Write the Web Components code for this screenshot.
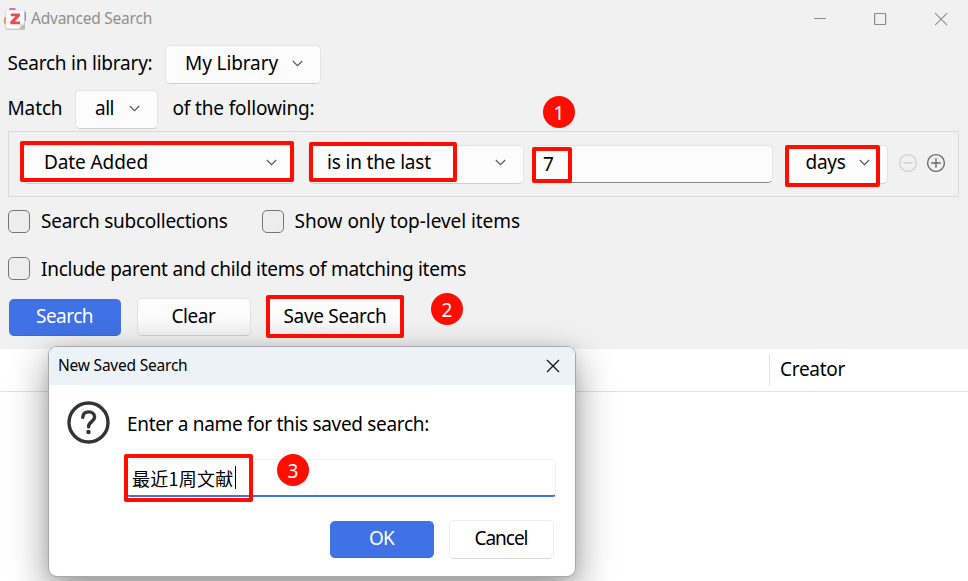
<!DOCTYPE html>
<html lang="en">
<head>
<meta charset="utf-8">
<title>Advanced Search</title>
<style>
html,body{margin:0;padding:0;overflow:hidden}
body{width:968px;height:581px;font:19px/26px "Noto Sans","Noto Sans CJK SC",sans-serif;color:#000;background:#fff}
</style>
</head>
<body>
<search-window></search-window>
<script>
function define(name, html, after) {
  const t = document.createElement('template');
  t.innerHTML = html;
  customElements.define(name, class extends HTMLElement {
    connectedCallback() {
      if (this.shadowRoot) return;
      this.attachShadow({mode: 'open'}).append(t.content.cloneNode(true));
      if (after) after.call(this, this.shadowRoot);
    }
  });
}

/* A text run spaced out to an exact advance width. */
define('fit-text', `<style>
:host{display:inline-block;white-space:pre;flex:none}
span{display:inline-block}
</style><span><slot></slot></span>`, function (r) {
  const w = parseFloat(this.getAttribute('w')), s = r.querySelector('span');
  const n = this.textContent.length;
  if (w) {
    s.style.letterSpacing = ((w - 1 - s.getBoundingClientRect().width) / n) + 'px';
    this.style.width = w + 'px';
  }
});

define('select-box', `<style>
:host{display:flex;box-sizing:border-box;height:38.5px;align-items:center;justify-content:space-between;background:#fcfcfc;border:1px solid #e3e3e3;border-bottom-color:#cfcfcf;border-radius:5px;padding:0 17.5px 3px 19px;flex:none}
svg{width:11px;height:7px;display:block;margin-top:1px}
</style><slot></slot><svg viewBox="0 0 11 7" fill="none" stroke="#555" stroke-width="1.1"><path d="M.8 1 5.5 5.7 10.2 1"/></svg>`);

define('check-item', `<style>
:host{display:flex;align-items:center;gap:11px;height:24px;flex:none}
i{box-sizing:border-box;width:22px;height:23px;border:1.5px solid #767676;border-radius:5px;background:#ededed}
div{padding-bottom:var(--lift,2px)}
</style><i></i><div><slot></slot></div>`);

define('push-button', `<style>
:host{display:flex;box-sizing:border-box;height:38.5px;align-items:center;justify-content:center;border:1px solid #e2e2e2;border-bottom-color:#cfcfcf;border-radius:5px;background:linear-gradient(#fdfdfd,#fbfbfb 55%,#f1f1f1);padding-bottom:var(--drop,3px);flex:none}
:host([primary]){background:#4072e5;color:#fff;border-color:#4072e5 #4072e5 #3e69cc;height:37px;margin-top:1px;padding-bottom:var(--drop-primary,4px)}
:host([plain]){background:#fff;border-color:#ededed #ededed #d8d8d8}
</style><slot></slot>`);

define('mark-frame', `<style>
:host{position:absolute;box-sizing:border-box;border:4px solid #ff0d00;border-radius:2px}
</style>`, function () {
  const [x, y, w, h] = this.getAttribute('at').split(' ');
  Object.assign(this.style, {left: x + 'px', top: y + 'px', width: w + 'px', height: h + 'px'});
});

define('mark-badge', `<style>
:host{position:absolute;width:32px;height:32px;border-radius:50%;background:#ff0d00;color:#fff;display:flex;align-items:center;justify-content:center;font-size:19px;line-height:32px}
div{padding-top:1px}
</style><div><slot></slot></div>`, function () {
  const [x, y] = this.getAttribute('at').split(' ');
  Object.assign(this.style, {left: x + 'px', top: y + 'px'});
});

define('title-bar', `<style>
:host{display:flex;box-sizing:border-box;height:38px;align-items:center;color:#8f8f8f;font-size:15.5px;padding:0 0 2px 3px}
.logo{width:23px;height:23px;margin-right:5px}
.sys{margin-left:auto;display:flex;gap:46px;padding:1px 20.500px 0 0}
.sys svg{width:14px;height:14px;display:block}
</style>
<svg class="logo" viewBox="0 0 22 22"><rect x="6" y="1" width="6" height="4" fill="#c878a8"/><rect x="1" y="10" width="4" height="6" fill="#f08a5c"/><rect x="18" y="5" width="4" height="8" fill="#7490e4"/><rect x="2.5" y="2.8" width="18.5" height="19" rx="1.5" fill="#b9b9b9"/><path d="M3 3h17.300v13l-4.800 4.700H3z" fill="#fafafa"/><path d="M20.300 15.500l-4.800 5.200.4-4z" fill="#dedbc8"/><path d="M7.500 6.200h8.700v2.500L11.300 13.800h5V16.500H7v-2.600l5-5.100H7.500z" fill="#f14853"/></svg>
<fit-text w="122">Advanced Search</fit-text>
<div class="sys">
<svg viewBox="0 0 14 14" stroke="#8c8c8c" stroke-width="1"><path d="M0 6.500h12"/></svg>
<svg viewBox="0 0 14 14" fill="none" stroke="#8c8c8c" stroke-width="1.200"><rect x=".6" y="1.500" width="11" height="11" rx=".5"/></svg>
<svg viewBox="0 0 14 14" stroke="#8c8c8c" stroke-width="1.100"><path d="M1.100 1.100l12 12M13.100 1.100l-12 12"/></svg>
</div>`);

define('condition-row', `<style>
:host{display:flex;box-sizing:border-box;width:951px;height:66px;border:1px solid #dadada;padding:13px 0 0 14px;margin-left:8px}
.field{box-sizing:border-box;width:240px;height:38px;background:#fcfcfc;border:1px solid #e3e3e3;border-bottom:1px solid #858585;border-radius:5px;margin:0 12.500px 0 9.500px;padding:5px 0 0 9px}
.ops{display:flex;gap:8px;margin:8px 0 0 10px}
select-box{padding-bottom:4px;padding-right:17px}
svg{width:20px;height:20px;display:block}
</style>
<select-box style="width:272px;padding-left:20px"><fit-text w="105">Date Added</fit-text></select-box>
<select-box style="width:215.500px;margin-left:13px;padding-left:18px"><fit-text w="105">is in the last</fit-text></select-box>
<div class="field"><fit-text>7</fit-text></div>
<select-box style="width:102px"><fit-text w="41">days</fit-text></select-box>
<div class="ops">
<svg viewBox="0 0 20 20" fill="none" stroke="#d0d0d0" stroke-width="1.300"><circle cx="10" cy="10" r="8.400"/><path d="M5.500 10h9"/></svg>
<svg viewBox="0 0 20 20" fill="none" stroke="#6b6b6b" stroke-width="1.400"><circle cx="10" cy="10" r="8.400"/><path d="M5.200 10h9.600M10 5.200v9.600"/></svg>
</div>`);

define('name-dialog', `<style>
:host{position:absolute;left:48px;top:346px;width:528px;height:231px;box-sizing:border-box;border:1px solid #a9a9a9;border-radius:9px;background:#fff;overflow:hidden;box-shadow:0 15px 38px rgba(0,0,0,.42),0 0 12px rgba(0,0,0,.08)}
header{display:flex;justify-content:space-between;align-items:center;height:38px;background:linear-gradient(90deg,#ecf3f7,#edf2f9 40%,#edf2f7);font-size:15.500px;padding:0 15px 0 9px}
header fit-text{padding-bottom:2px}
header svg{width:14px;height:14px}
.ask{display:flex;align-items:center;padding:16px 0 0 18px}
.ask svg{width:43px;height:43px;margin-right:17px}
.ask fit-text{padding-top:3px}
.field{display:flex;box-sizing:border-box;width:429px;height:38px;margin:15px 0 0 78px;border:1px solid #efefef;border-bottom:2px solid #4072e5;border-radius:5px 5px 3px 3px;padding:5px 0 0 4px;font:18px/26px "Noto Sans CJK SC",sans-serif}
.caret{width:1px;height:23px;background:#000;margin-top:1px}
.acts{display:flex;justify-content:flex-end;gap:15px;padding:23px 21px 0 0}
</style>
<header><fit-text w="130.500">New Saved Search</fit-text><svg viewBox="0 0 14 14" stroke="#111" stroke-width="1.200"><path d="M1 1l12 12M13 1L1 13"/></svg></header>
<div class="ask"><svg viewBox="0 0 43 43" fill="none" stroke="#333" stroke-width="3.400"><circle cx="21.500" cy="21.500" r="19.500"/><path d="M15.700 16.300c.3-3.500 2.600-5.400 5.900-5.400 3.500 0 6 2 6 5.100 0 4.800-6 4.600-6 9.800" stroke-linecap="round"/><circle cx="21.500" cy="31" r="2.200" fill="#333" stroke="none"/></svg><fit-text w="303">Enter a name for this saved search:</fit-text></div>
<div class="field"><fit-text w="102.500">最近1周文献</fit-text><span class="caret"></span></div>
<div class="acts"><push-button primary style="width:104px"><fit-text w="26">OK</fit-text></push-button><push-button plain style="width:105px"><fit-text w="54">Cancel</fit-text></push-button></div>`);

define('search-window', `<style>
:host{display:block;position:relative;width:968px;height:581px;overflow:hidden;background:#fff}
.panel{height:349px;background:#f1f1f1}
.row{display:flex;align-items:center}
.row>fit-text{padding-bottom:3px}
.checks{gap:33px;padding-left:8px}
.buttons{display:flex;padding-left:9px;margin-top:17px;gap:16px;--drop:1px;--drop-primary:2px}
.results{display:flex;height:42px;border-bottom:1px solid #e0e0e0;align-items:center;justify-content:flex-end}
.creator{display:flex;align-items:center;box-sizing:border-box;width:199px;height:32px;border-left:1px solid #e2e2e2;padding:0 0 3px 10px}
</style>
<div class="panel">
<title-bar></title-bar>
<div class="row" style="padding:7px 0 0 7.500px"><fit-text w="146">Search in library:</fit-text><select-box style="width:156px;margin-left:11.500px"><fit-text w="94">My Library</fit-text></select-box></div>
<div class="row" style="padding:6.500px 0 0 7.500px"><fit-text w="56">Match</fit-text><select-box style="width:83px;margin-left:11.500px;padding-right:17px"><fit-text w="20">all</fit-text></select-box><fit-text w="143" style="margin-left:14.500px">of the following:</fit-text></div>
<condition-row style="margin-top:2.500px"></condition-row>
<div class="row checks" style="margin-top:12.500px"><check-item><fit-text w="187.500">Search subcollections</fit-text></check-item><check-item><fit-text w="226.500">Show only top-level items</fit-text></check-item></div>
<div class="row checks" style="margin-top:23px;--lift:0px"><check-item><fit-text w="426">Include parent and child items of matching items</fit-text></check-item></div>
<div class="buttons"><push-button primary style="width:112px"><fit-text w="58">Search</fit-text></push-button><push-button style="width:114px"><fit-text w="45">Clear</fit-text></push-button><push-button style="width:137px"><fit-text w="104">Save Search</fit-text></push-button></div>
</div>
<div class="results"><div class="creator"><fit-text w="66">Creator</fit-text></div></div>
<name-dialog></name-dialog>
<mark-frame at="20 141 274 41"></mark-frame>
<mark-frame at="309 142 148 40"></mark-frame>
<mark-frame at="532 147 40 36"></mark-frame>
<mark-frame at="785 145 95 42"></mark-frame>
<mark-frame at="266 295 138 43"></mark-frame>
<mark-frame at="124 454 129 48"></mark-frame>
<mark-badge at="543 96">1</mark-badge>
<mark-badge at="431 293">2</mark-badge>
<mark-badge at="277 454">3</mark-badge>`);
</script>
</body>
</html>
